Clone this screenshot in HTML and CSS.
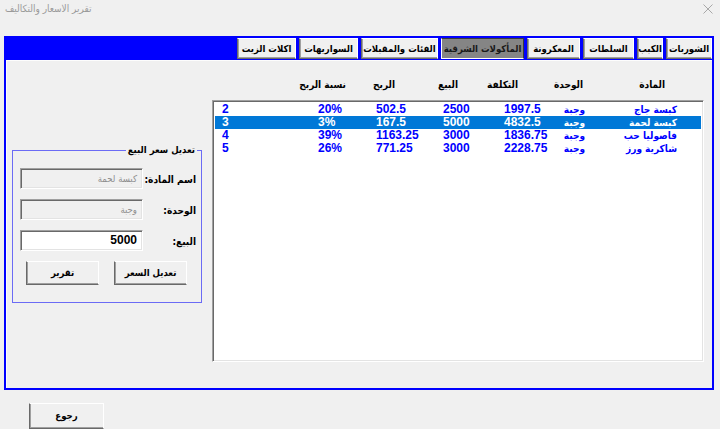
FILE: index.html
```html
<!DOCTYPE html>
<html lang="ar">
<head>
<meta charset="utf-8">
<title>تقرير الاسعار والتكاليف</title>
<link rel="stylesheet" href="styles.css">
</head>
<body>
<div class="window">
  <div class="titlebar">
    <span class="title" dir="rtl">تقرير الاسعار والتكاليف</span>
    <svg class="close" width="10" height="10" viewBox="0 0 10 10"><path d="M0.5 0.5 L9.5 9.5 M9.5 0.5 L0.5 9.5" stroke="#a8a8a8" stroke-width="1" fill="none"/></svg>
  </div>
  <div class="frame">
    <div class="tabs" dir="rtl">
      <div class="tab">الشوربات</div>
      <div class="tab">الكبب</div>
      <div class="tab">السلطات</div>
      <div class="tab">المعكرونة</div>
      <div class="tab active">المأكولات الشرقية</div>
      <div class="tab">الفئات والمقبلات</div>
      <div class="tab">السواريهات</div>
      <div class="tab">اكلات الزيت</div>
    </div>
    <div class="content">
      <div class="leftcol">
        <div class="group">
          <span class="group-title" dir="rtl">تعديل سعر البيع</span>
          <div class="form" dir="rtl">
            <label class="lbl">اسم المادة:</label>
            <div class="field disabled">كبسة لحمة</div>
            <label class="lbl">الوحدة:</label>
            <div class="field disabled">وجبة</div>
            <label class="lbl">البيع:</label>
            <div class="field value">5000</div>
            <div class="btnrow">
              <div class="btn">تعديل السعر</div>
              <div class="btn">تقرير</div>
            </div>
          </div>
        </div>
      </div>
      <div class="rightcol">
        <div class="headers">
          <span>نسبة الربح</span>
          <span>الربح</span>
          <span>البيع</span>
          <span>التكلفة</span>
          <span>الوحدة</span>
          <span>المادة</span>
        </div>
        <div class="list">
          <div class="row"><span>2</span><span>20%</span><span>502.5</span><span>2500</span><span>1997.5</span><span class="ar">وجبة</span><span class="ar">كبسة جاج</span></div>
          <div class="row sel"><span>3</span><span>3%</span><span>167.5</span><span>5000</span><span>4832.5</span><span class="ar">وجبة</span><span class="ar">كبسة لحمة</span></div>
          <div class="row"><span>4</span><span>39%</span><span>1163.25</span><span>3000</span><span>1836.75</span><span class="ar">وجبة</span><span class="ar">فاصوليا حب</span></div>
          <div class="row"><span>5</span><span>26%</span><span>771.25</span><span>3000</span><span>2228.75</span><span class="ar">وجبة</span><span class="ar">شاكرية ورز</span></div>
        </div>
      </div>
    </div>
  </div>
  <div class="footer">
    <div class="btn back">رجوع</div>
  </div>
</div>
</body>
</html>
```

FILE: styles.css
```css
* { box-sizing: border-box; }
html, body { margin: 0; padding: 0; }
body {
  width: 720px;
  height: 429px;
  overflow: hidden;
  background: #f0f0f0;
  font-family: "Liberation Sans", "DejaVu Sans Condensed", "DejaVu Sans", sans-serif;
  color: #000;
}
.window { width: 720px; height: 429px; display: flex; flex-direction: column; }

.titlebar {
  height: 36px;
  display: flex;
  justify-content: space-between;
  align-items: flex-start;
  padding: 3px 7px 0 5px;
}
.title { font-size: 10px; color: #9a9a9a; font-family: "DejaVu Sans Condensed", "DejaVu Sans", sans-serif; line-height: 12px; }
.close { margin-top: 1px; }

.frame {
  margin-left: 4px;
  width: 710px;
  height: 355px;
  border: 2px solid #0000ff;
  display: flex;
  flex-direction: column;
}
.tabs {
  height: 22px;
  background: #0000ff;
  display: flex;
  gap: 3px;
  align-items: flex-start;
}
.tab {
  height: 21px;
  background: #f0f0f0;
  border-top: 1px solid #fff;
  border-right: 1px solid #fff;
  border-left: 1px solid #696969;
  border-bottom: 1px solid #696969;
  box-shadow: inset 1px -1px 0 #a0a0a0;
  font-family: "DejaVu Sans Condensed", "DejaVu Sans", sans-serif;
  font-weight: bold;
  font-size: 9.5px;
  display: flex;
  align-items: center;
  justify-content: center;
  white-space: nowrap;
  overflow: hidden;
}
.tab:nth-child(1) { width: 46px; }
.tab:nth-child(2) { width: 26px; }
.tab:nth-child(3) { width: 51px; }
.tab:nth-child(4) { width: 53px; }
.tab:nth-child(5) { width: 83px; }
.tab:nth-child(6) { width: 77px; }
.tab:nth-child(7) { width: 59px; }
.tab:nth-child(8) { width: 59px; }
.tab.active {
  background: #858585;
  border-top: 1px solid #3a3a3a;
  border-right: 1px solid #3a3a3a;
  border-left: 1px solid #fff;
  border-bottom: 1px solid #fff;
  box-shadow: none;
  color: #1a1a1a;
}

.content {
  flex: 1;
  border-top: 1px solid #fdfdfd;
  border-left: 1px solid #fdfdfd;
  display: grid;
  grid-template-columns: 190px 492px;
  column-gap: 10px;
  padding-left: 5px;
  align-items: start;
}

.leftcol { padding-top: 89px; }
.group {
  position: relative;
  height: 153px;
  border: 1px solid #6b6bf5;
}
.group-title {
  position: absolute;
  top: -7px;
  right: 4px;
  background: #f0f0f0;
  padding: 0 2px;
  font-family: "DejaVu Sans Condensed", "DejaVu Sans", sans-serif;
  font-weight: bold;
  font-size: 9.5px;
  line-height: 12px;
  white-space: nowrap;
}
.form {
  display: grid;
  grid-template-columns: 58px 123px;
  row-gap: 10px;
  padding: 17px 0 0 7px;
}
.lbl {
  font-family: "DejaVu Sans Condensed", "DejaVu Sans", sans-serif;
  font-weight: bold;
  font-size: 10px;
  display: flex;
  align-items: center;
  padding-right: 5px;
  padding-top: 3px;
  white-space: nowrap;
}
.field {
  height: 21px;
  border-top: 1px solid #a0a0a0;
  border-left: 1px solid #a0a0a0;
  border-bottom: 1px solid #fff;
  border-right: 1px solid #fff;
  box-shadow: inset 1px 1px 0 #696969, inset -1px -1px 0 #e3e3e3;
  display: flex;
  align-items: center;
  padding-right: 5px;
  font-size: 9.5px;
  font-family: "DejaVu Sans Condensed", "DejaVu Sans", sans-serif;
}
.field.disabled { background: #f0f0f0; color: #8d8d8d; }
.field.value { background: #fff; font-family: "Liberation Sans", sans-serif; font-weight: bold; font-size: 12px; }

.btnrow {
  grid-column: 1 / -1;
  display: flex;
  gap: 15px;
  padding-right: 14px;
}
.btn {
  width: 73px;
  height: 24px;
  background: #f0f0f0;
  border-top: 1px solid #fff;
  border-right: 1px solid #fff;
  border-left: 1px solid #696969;
  border-bottom: 1px solid #696969;
  box-shadow: inset 1px -1px 0 #a0a0a0;
  display: flex;
  align-items: center;
  justify-content: center;
  font-family: "DejaVu Sans Condensed", "DejaVu Sans", sans-serif;
  font-weight: bold;
  font-size: 9.5px;
  white-space: nowrap;
}

.rightcol { display: flex; flex-direction: column; }
.headers {
  margin-top: 17px;
  height: 14px;
  display: grid;
  grid-template-columns: 134px 49px 63px 60px 65px 82px;
  font-family: "DejaVu Sans Condensed", "DejaVu Sans", sans-serif;
  font-weight: bold;
  font-size: 10px;
  line-height: 14px;
  text-align: right;
}
.headers span { white-space: nowrap; direction: rtl; }
.list {
  margin-top: 8px;
  height: 262px;
  background: #fff;
  border-top: 1px solid #a0a0a0;
  border-left: 1px solid #a0a0a0;
  border-bottom: 1px solid #fff;
  border-right: 1px solid #fff;
  box-shadow: inset 1px 1px 0 #696969, inset -1px -1px 0 #e3e3e3;
  padding: 2px 2px 0 2px;
}
.row {
  height: 13px;
  display: grid;
  grid-template-columns: 103px 58px 67px 61px 57px 24px 92px;
  color: #0000ff;
  font-weight: bold;
  font-size: 12px;
  line-height: 13px;
  white-space: nowrap;
}
.row span:first-child { padding-left: 7px; }
.row .ar {
  text-align: right;
  direction: rtl;
  font-family: "DejaVu Sans Condensed", "DejaVu Sans", sans-serif;
  font-size: 10px;
}
.row.sel { background: #0078d7; color: #fff; }

.footer { padding: 13px 0 0 29px; }
.btn.back { width: 75px; height: 26px; }
```
